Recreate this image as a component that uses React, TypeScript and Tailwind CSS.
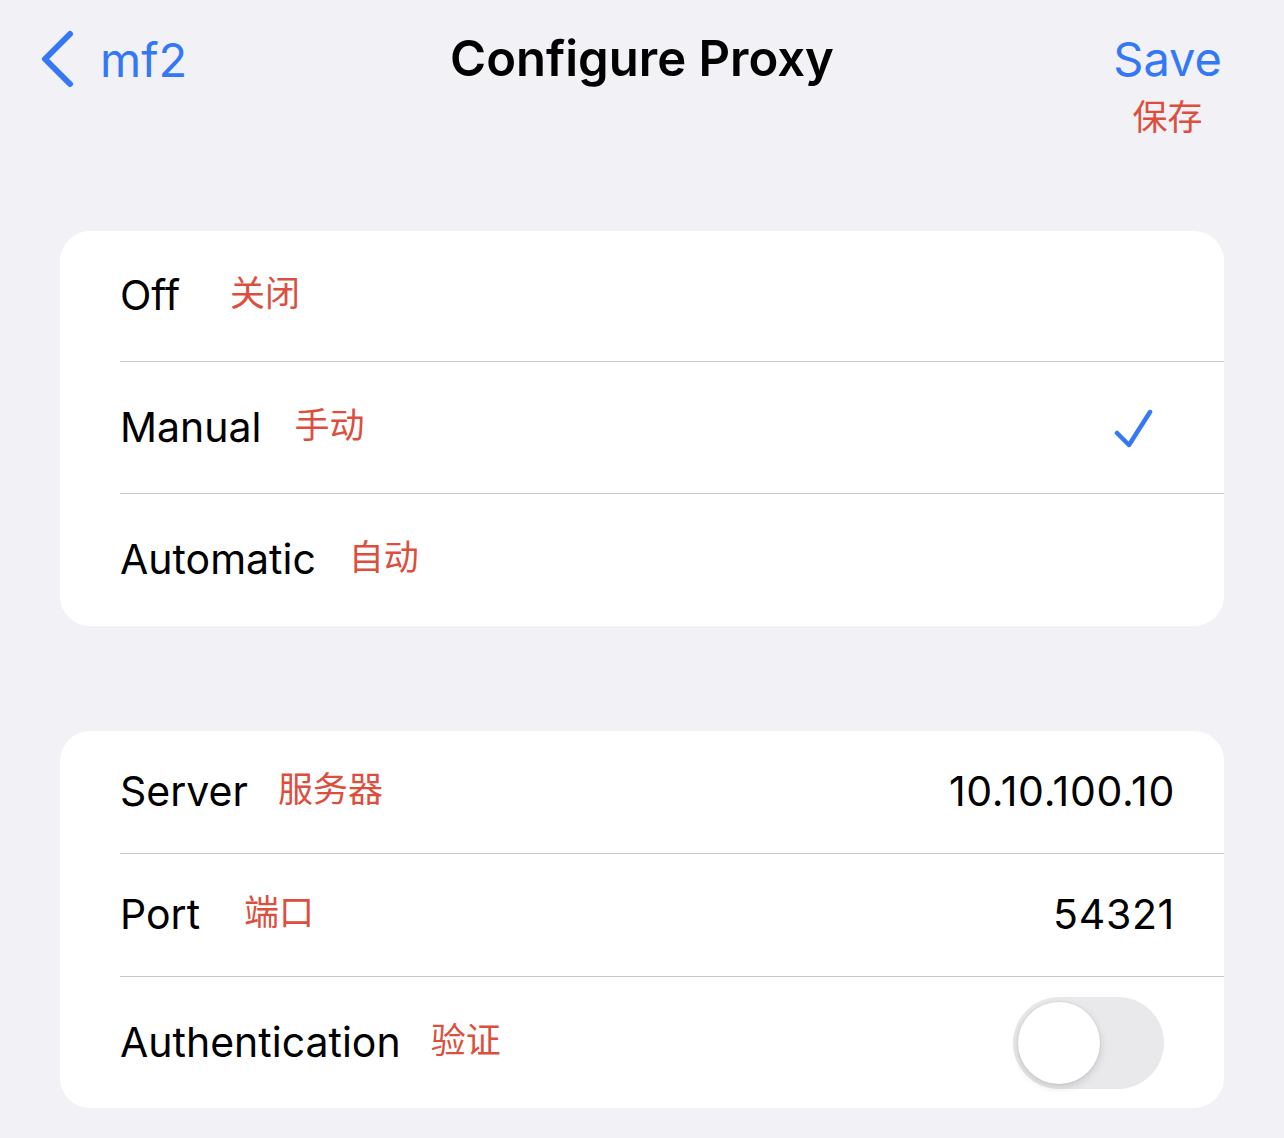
import React from 'react';

const FONT = { fontFamily: 'Inter, "Noto Sans CJK SC", sans-serif' };

type Row = { label: string; zh: string; gap: string; h: string; right?: React.ReactNode };

function Check() {
  return (
    <svg width="40" height="40" viewBox="0 0 40 40" className="mr-[70px]">
      <path d="M3 25 L15 37 L36 4" fill="none" stroke="#3478f6" strokeWidth="4.5" strokeLinecap="round" strokeLinejoin="round" />
    </svg>
  );
}

function Toggle() {
  return (
    <div className="mr-[60px] w-[151px] h-[92px] rounded-full bg-[#e9e9eb] p-[5px] flex items-center">
      <div className="w-[82px] h-[82px] rounded-full bg-white shadow-[0_3px_8px_rgba(0,0,0,0.15),0_0_0_1px_rgba(0,0,0,0.04)]" />
    </div>
  );
}

function Value({ children }: { children: React.ReactNode }) {
  return <span className="mr-[49px] text-[41px] text-black tracking-[0.7px]">{children}</span>;
}

function Card({ rows }: { rows: Row[] }) {
  return (
    <div className="mx-[60px] bg-white rounded-[30px] overflow-hidden">
      {rows.map((r, i) => (
        <div key={r.label} className="pl-[60px]">
          <div className={`flex items-center justify-between ${r.h} ${i > 0 ? 'border-t-[1.5px] border-[#c8c8cc]' : ''}`}>
            <div className="flex items-center">
              <span className="text-[41px] text-black">{r.label}</span>
              <span className={`${r.gap} mb-[5px] text-[35px] text-[#dc4f3e]`}>{r.zh}</span>
            </div>
            {r.right}
          </div>
        </div>
      ))}
    </div>
  );
}

export default function App() {
  return (
    <div style={FONT} className="w-[1284px] h-[1138px] bg-[#f1f1f6] overflow-hidden">
      <div className="relative h-[231px]">
        <div className="absolute left-[40px] top-[30px] flex items-center">
          <svg width="34" height="58" viewBox="0 0 34 58">
            <path d="M30 4 L5 29 L30 54" fill="none" stroke="#3478f6" strokeWidth="6" strokeLinecap="round" strokeLinejoin="round" />
          </svg>
          <span className="ml-[26px] text-[47px] text-[#3478f6] leading-none">mf2</span>
        </div>
        <div className="absolute left-0 right-0 top-[34px] text-center text-[49px] font-semibold text-black leading-none">
          Configure Proxy
        </div>
        <div className="absolute right-[62px] top-[35px] flex flex-col items-center">
          <span className="text-[47px] text-[#3478f6] leading-none">Save</span>
          <span className="mt-[18px] text-[35px] text-[#dc4f3e] leading-none">保存</span>
        </div>
      </div>
      <Card
        rows={[
          { label: 'Off', zh: '关闭', gap: 'ml-[50px]', h: 'h-[130px]' },
          { label: 'Manual', zh: '手动', gap: 'ml-[33px]', h: 'h-[132px]', right: <Check /> },
          { label: 'Automatic', zh: '自动', gap: 'ml-[33px]', h: 'h-[133px]' },
        ]}
      />
      <div className="h-[105px]" />
      <Card
        rows={[
          { label: 'Server', zh: '服务器', gap: 'ml-[30px]', h: 'h-[122px]', right: <Value>10.10.100.10</Value> },
          { label: 'Port', zh: '端口', gap: 'ml-[44px]', h: 'h-[123px]', right: <Value>54321</Value> },
          { label: 'Authentication', zh: '验证', gap: 'ml-[30px]', h: 'h-[132px]', right: <Toggle /> },
        ]}
      />
    </div>
  );
}
